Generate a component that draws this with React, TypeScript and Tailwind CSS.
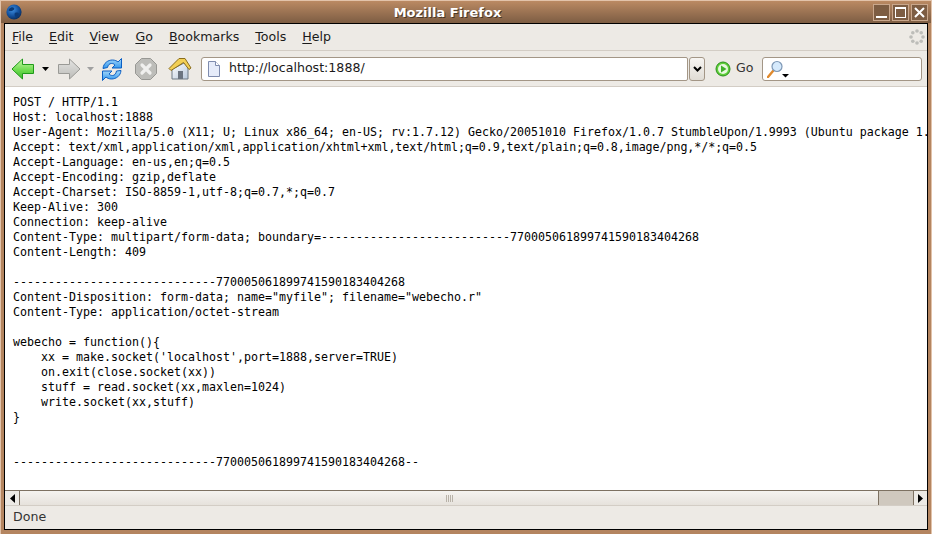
import React from "react";

const ui = { fontFamily: '"DejaVu Sans", sans-serif' };
const mono = { fontFamily: '"DejaVu Sans Mono", monospace' };

const lines = [
  "POST / HTTP/1.1",
  "Host: localhost:1888",
  "User-Agent: Mozilla/5.0 (X11; U; Linux x86_64; en-US; rv:1.7.12) Gecko/20051010 Firefox/1.0.7 StumbleUpon/1.9993 (Ubuntu package 1.0.7)",
  "Accept: text/xml,application/xml,application/xhtml+xml,text/html;q=0.9,text/plain;q=0.8,image/png,*/*;q=0.5",
  "Accept-Language: en-us,en;q=0.5",
  "Accept-Encoding: gzip,deflate",
  "Accept-Charset: ISO-8859-1,utf-8;q=0.7,*;q=0.7",
  "Keep-Alive: 300",
  "Connection: keep-alive",
  "Content-Type: multipart/form-data; boundary=---------------------------770005061899741590183404268",
  "Content-Length: 409",
  "",
  "-----------------------------770005061899741590183404268",
  'Content-Disposition: form-data; name="myfile"; filename="webecho.r"',
  "Content-Type: application/octet-stream",
  "",
  "webecho = function(){",
  "    xx = make.socket('localhost',port=1888,server=TRUE)",
  "    on.exit(close.socket(xx))",
  "    stuff = read.socket(xx,maxlen=1024)",
  "    write.socket(xx,stuff)",
  "}",
  "",
  "",
  "-----------------------------770005061899741590183404268--",
];

function Globe() {
  return (
    <svg width="16" height="16" viewBox="0 0 16 16">
      <defs>
        <radialGradient id="gl" cx="0.4" cy="0.35" r="0.7">
          <stop offset="0" stopColor="#3f8fe0" />
          <stop offset="0.6" stopColor="#124f9c" />
          <stop offset="1" stopColor="#0a2a55" />
        </radialGradient>
      </defs>
      <circle cx="8" cy="8" r="7.6" fill="url(#gl)" />
      <path d="M3 5c2-2 4-2 5-1s-1 3-3 3-3 0-2-2zM9 9c2-1 4 0 4 1s-2 3-3 3-2-3-1-4z" fill="#0b3a78" />
    </svg>
  );
}

function Back() {
  return (
    <svg width="24" height="24" viewBox="0 0 24 24">
      <defs>
        <linearGradient id="bk" x1="0" y1="0" x2="0" y2="1">
          <stop offset="0" stopColor="#c8f7a8" />
          <stop offset="0.55" stopColor="#6fdc50" />
          <stop offset="1" stopColor="#3cb82c" />
        </linearGradient>
      </defs>
      <path d="M1 12 11.5 2v5.5H22.5v9H11.5V22z" fill="url(#bk)" stroke="#1f9a1a" strokeWidth="1" strokeLinejoin="round" />
    </svg>
  );
}

function Forward() {
  return (
    <svg width="24" height="24" viewBox="0 0 24 24">
      <defs>
        <linearGradient id="fw" x1="0" y1="0" x2="0" y2="1">
          <stop offset="0" stopColor="#e4e4e2" />
          <stop offset="1" stopColor="#bcbcb8" />
        </linearGradient>
      </defs>
      <path d="M23 12 12.5 2v5.5H1.5v9h11V22z" fill="url(#fw)" stroke="#9a9a96" strokeWidth="1" strokeLinejoin="round" />
    </svg>
  );
}

function Reload() {
  return (
    <svg width="24" height="24" viewBox="0 0 24 24">
      <defs>
        <linearGradient id="rl" x1="0" y1="0" x2="0" y2="1">
          <stop offset="0" stopColor="#a5d8fb" />
          <stop offset="1" stopColor="#2f95ec" />
        </linearGradient>
      </defs>
      <path d="M3 11.5C3.5 6 8 3 12.5 3c2.5 0 4.5 1 5.5 2l3.5-3.5V11H12l3-3c-1-1-2-1.5-3.5-1.5-2 0-3.5 1.5-4 4z" fill="url(#rl)" stroke="#0b5fc4" strokeWidth="1" strokeLinejoin="round" />
      <path d="M21 13.5C20.5 19 16 22 11.5 22c-2.5 0-4.5-1-5.5-2l-3.500 3.500V14H12l-3 3c1 1 2 1.500 3.500 1.500 2 0 3.500-1.500 4-4.500z" fill="url(#rl)" stroke="#0b5fc4" strokeWidth="1" strokeLinejoin="round" />
    </svg>
  );
}

function Stop() {
  return (
    <svg width="24" height="24" viewBox="0 0 24 24">
      <path d="M7.5 1.500h9l6 6v9l-6 6h-9l-6-6v-9z" fill="#bdbdb9" stroke="#989894" strokeWidth="1" />
      <path d="M8 8l8 8M16 8l-8 8" stroke="#f0f0ee" strokeWidth="3.2" strokeLinecap="round" />
    </svg>
  );
}

function Home() {
  return (
    <svg width="24" height="24" viewBox="0 0 24 24">
      <defs>
        <linearGradient id="hm" x1="0" y1="0" x2="1" y2="1">
          <stop offset="0" stopColor="#ffffff" />
          <stop offset="1" stopColor="#b9c9dc" />
        </linearGradient>
      </defs>
      <path d="M4 12.5V22h16V10l-4-4z" fill="url(#hm)" stroke="#6f7a85" strokeWidth="1" />
      <path d="M1 11.5 11 1.500h6l6 9.500-2 1.500L15.500 5.500 3 13.500z" fill="#f2cf55" stroke="#8a6d1c" strokeWidth="1" strokeLinejoin="round" />
      <rect x="10" y="14" width="5" height="8" fill="#6b7480" />
    </svg>
  );
}

function Doc() {
  return (
    <svg width="16" height="16" viewBox="0 0 16 16">
      <path d="M2.5.5h7l4 4v11h-11z" fill="#e6ecfa" stroke="#7f8cae" />
      <path d="M9.5.5v4h4" fill="#fff" stroke="#7f8cae" />
    </svg>
  );
}

function GoIcon() {
  return (
    <svg width="16" height="16" viewBox="0 0 16 16">
      <circle cx="8" cy="8" r="7" fill="#5fcf3a" stroke="#2b8f1c" />
      <circle cx="8" cy="8" r="5" fill="#e8f8e0" />
      <path d="M6 4.5 11.5 8 6 11.5z" fill="#3fb02a" />
    </svg>
  );
}

function Search() {
  return (
    <svg width="22" height="18" viewBox="0 0 22 18">
      <path d="M1 17 6 11" stroke="#e08a2e" strokeWidth="2.4" strokeLinecap="round" />
      <circle cx="10" cy="6.5" r="5" fill="#d6eafc" stroke="#7d97b5" strokeWidth="1.2" />
      <path d="M15 14h7l-3.500 3.500z" fill="#000" />
    </svg>
  );
}

function Throbber() {
  const d = [[8, 2], [12.2, 3.8], [14, 8], [12.2, 12.2], [8, 14], [3.8, 12.2], [2, 8], [3.8, 3.8]];
  return (
    <svg width="16" height="16" viewBox="0 0 16 16">
      {d.map(([x, y], i) => (
        <circle key={i} cx={x} cy={y} r="1.8" fill="#bdbdb9" />
      ))}
    </svg>
  );
}

function Caret({ color }: { color: string }) {
  return (
    <svg width="7" height="4" viewBox="0 0 7 4">
      <path d="M0 0h7L3.5 4z" fill={color} />
    </svg>
  );
}

function WinBtn({ children }: { children: React.ReactNode }) {
  return (
    <div className="w-[17px] h-[17px] border border-[#c9a78c] bg-[#7d5d43] flex items-center justify-center">
      {children}
    </div>
  );
}

function Menu({ k, rest }: { k: string; rest: string }) {
  return (
    <span>
      <span className="underline underline-offset-2">{k}</span>
      {rest}
    </span>
  );
}

export default function App() {
  return (
    <div
      className="w-[932px] h-[534px] overflow-hidden flex flex-col bg-[#b48560] border-t border-l border-r border-[#e2c3aa] text-[#1a1a1a]"
      style={ui}
    >
      <div className="h-[22px] shrink-0 flex items-center bg-gradient-to-b from-[#bb8a63] to-[#7d5d43] pl-[5px] pr-[3px] relative">
        <Globe />
        <div className="flex-1 text-center text-white font-bold text-[13px] leading-none [text-shadow:1px_1px_0_#4a3626]">
          Mozilla Firefox
        </div>
        <div className="flex gap-[2px]">
          <WinBtn>
            <div className="w-[11px] h-[2px] bg-white mt-[9px]" />
          </WinBtn>
          <WinBtn>
            <div className="w-[11px] h-[11px] border border-white border-t-2" />
          </WinBtn>
          <WinBtn>
            <svg width="11" height="11" viewBox="0 0 11 11">
              <path d="M1 1l9 9M10 1l-9 9" stroke="#fff" strokeWidth="2" />
            </svg>
          </WinBtn>
        </div>
      </div>

      <div className="flex-1 min-h-0 mx-[3px] mb-[4px] border border-black bg-[#edeae5] flex flex-col">
        <div className="h-[27px] shrink-0 flex items-center pl-[7px] pr-[2px] border-b border-[#d3cdc5] text-[12.6px] gap-[16px] relative">
          <Menu k="F" rest="ile" />
          <Menu k="E" rest="dit" />
          <Menu k="V" rest="iew" />
          <Menu k="G" rest="o" />
          <Menu k="B" rest="ookmarks" />
          <Menu k="T" rest="ools" />
          <Menu k="H" rest="elp" />
          <div className="ml-auto">
            <Throbber />
          </div>
        </div>

        <div className="h-[36px] shrink-0 flex items-center pl-[6px] pr-[5px] border-b border-[#d3cdc5]">
          <Back />
          <div className="ml-[7px] mr-[8px]">
            <Caret color="#000" />
          </div>
          <Forward />
          <div className="ml-[6px] mr-[6px]">
            <Caret color="#a0a0a0" />
          </div>
          <Reload />
          <div className="w-[10px]" />
          <Stop />
          <div className="w-[10px]" />
          <Home />
          <div className="w-[9px]" />
          <div className="w-[487px] h-[24px] bg-white border border-[#a39686] rounded-l-[3px] rounded-r-[2px] flex items-center pl-[4px] gap-[7px]">
            <Doc />
            <span className="text-[12.6px]">http://localhost:1888/</span>
          </div>
          <div className="w-[16px] h-[24px] ml-px bg-gradient-to-b from-[#f7f5f2] to-[#e0dcd5] border border-[#a39686] rounded-[3px] flex items-center justify-center">
            <svg width="9" height="6" viewBox="0 0 9 6">
              <path d="M1 1l3.5 3.5L8 1" stroke="#000" strokeWidth="2" fill="none" />
            </svg>
          </div>
          <div className="w-[10px]" />
          <GoIcon />
          <span className="ml-[5px] text-[12.6px] text-[#333]">Go</span>
          <div className="w-[9px]" />
          <div className="flex-1 h-[24px] bg-white border border-[#a39686] rounded-[3px] flex items-center pl-[4px]">
            <Search />
          </div>
        </div>

        <div className="flex-1 min-h-0 bg-white overflow-hidden pt-[8px] pl-[8px]">
          <pre className="text-[11.63px] leading-[15px] text-black whitespace-pre m-0" style={mono}>
            {lines.map((l, i) => (
              <div key={i} className={i === 3 ? "h-[15px] tracking-[-0.047px]" : "h-[15px]"}>
                {l}
              </div>
            ))}
          </pre>
        </div>

        <div className="h-[15px] shrink-0 flex border-t border-[#7d7162] bg-[#cfc8be]">
          <div className="w-[15px] bg-[#edeae5] border-r border-[#7d7162] flex items-center justify-center">
            <svg width="5" height="9" viewBox="0 0 5 9">
              <path d="M5 0v9L0 4.5z" fill="#000" />
            </svg>
          </div>
          <div className="w-[859px] bg-gradient-to-b from-[#f5f3f0] to-[#e6e2dc] border-r border-[#7d7162] flex items-center justify-center gap-px">
            {[0, 1, 2, 3].map((i) => (
              <div key={i} className="w-px h-[7px] bg-[#b8b2a8]" />
            ))}
          </div>
          <div className="flex-1" />
          <div className="w-[14px] bg-[#edeae5] border-l border-[#7d7162] flex items-center justify-center">
            <svg width="5" height="9" viewBox="0 0 5 9">
              <path d="M0 0v9l5-4.5z" fill="#000" />
            </svg>
          </div>
        </div>

        <div className="h-[24px] shrink-0 border-t border-[#d3cdc5] flex items-center pl-[8px] text-[12.6px] text-[#333]">
          Done
        </div>
      </div>
    </div>
  );
}
